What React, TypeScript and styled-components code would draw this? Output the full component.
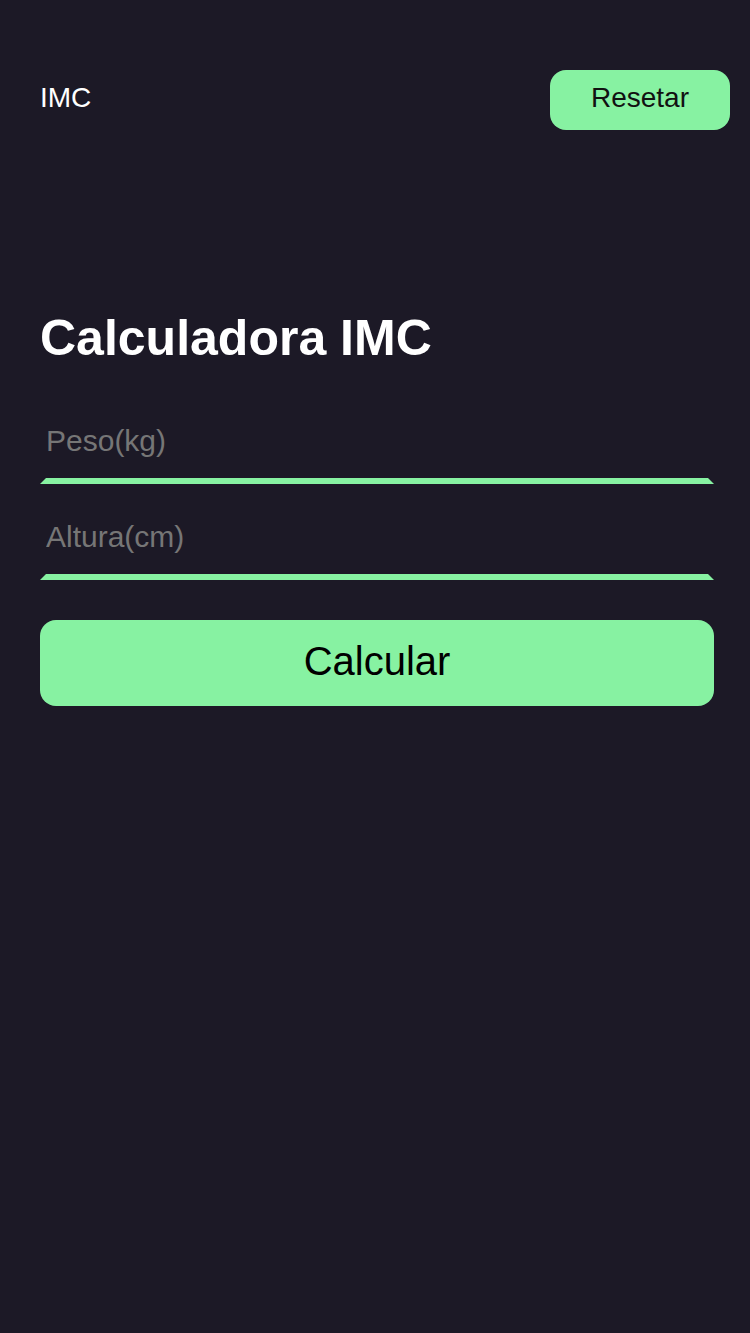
import React from "react";
import styled, { createGlobalStyle } from "styled-components";

const GREEN = "#87f2a2";
const BG = "#1c1926";

const GlobalStyle = createGlobalStyle`
  html, body {
    margin: 0;
    padding: 0;
    background: ${BG};
    min-height: 100%;
  }
  body {
    font-family: "Liberation Sans", Arial, sans-serif;
    color: #ffffff;
  }
  * { box-sizing: border-box; }
`;

const Page = styled.div`
  min-height: 1333px;
  background: ${BG};
  display: flex;
  flex-direction: column;
`;

const Header = styled.header`
  display: flex;
  justify-content: space-between;
  align-items: baseline;
  padding: 70px 20px 0 40px;
`;

const Brand = styled.span`
  font-size: 28px;
  color: #ffffff;
`;

const ResetButton = styled.button`
  width: 180px;
  height: 60px;
  padding: 12px 0 0;
  display: flex;
  justify-content: center;
  align-items: flex-start;
  border: none;
  border-radius: 16px;
  background: ${GREEN};
  color: #111111;
  font-family: "Liberation Sans", Arial, sans-serif;
  font-size: 28px;
  line-height: 32px;
  cursor: pointer;
`;

const Main = styled.main`
  display: flex;
  flex-direction: column;
  padding: 180px 36px 0 40px;
`;

const Title = styled.h1`
  margin: 0 0 39px;
  font-size: 50px;
  line-height: 57px;
  font-weight: 700;
  color: #ffffff;
`;

const Form = styled.form`
  display: flex;
  flex-direction: column;
  gap: 18px;
`;

const Field = styled.input`
  width: 100%;
  height: 78px;
  padding: 0 0 3px;
  border: none;
  border-left: 6px solid transparent;
  border-right: 6px solid transparent;
  border-bottom: 6px solid ${GREEN};
  background: transparent;
  color: #ffffff;
  font-family: "Liberation Sans", Arial, sans-serif;
  font-size: 30px;
  outline: none;

  &::placeholder {
    color: #767676;
  }
`;

const SubmitButton = styled.button`
  margin-top: 22px;
  width: 100%;
  height: 86px;
  padding: 0 0 4px;
  border: none;
  border-radius: 16px;
  background: ${GREEN};
  color: #000000;
  font-family: "Liberation Sans", Arial, sans-serif;
  font-size: 40px;
  cursor: pointer;
`;

export default function App() {
  return (
    <>
      <GlobalStyle />
      <Page>
        <Header>
          <Brand>IMC</Brand>
          <ResetButton type="button">Resetar</ResetButton>
        </Header>
        <Main>
          <Title>Calculadora IMC</Title>
          <Form onSubmit={(e) => e.preventDefault()}>
            <Field type="number" placeholder="Peso(kg)" />
            <Field type="number" placeholder="Altura(cm)" />
            <SubmitButton type="submit">Calcular</SubmitButton>
          </Form>
        </Main>
      </Page>
    </>
  );
}
